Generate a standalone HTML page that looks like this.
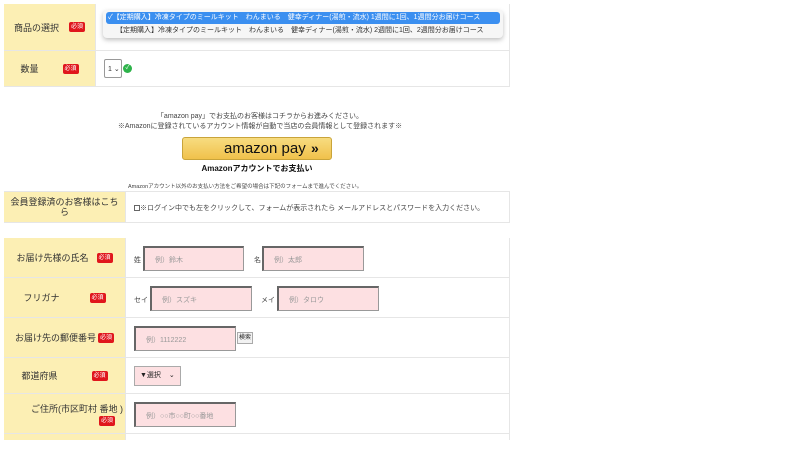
<!DOCTYPE html>
<html><head><meta charset="utf-8"><style>
*{box-sizing:border-box;margin:0;padding:0}
body{width:800px;height:450px;background:#fff;font-family:"Liberation Sans","Noto Sans CJK JP",sans-serif;color:#333;position:relative;overflow:hidden;font-size:8px}
.a{position:absolute}
.lab{background:#fcefb4;border-right:1px solid #e6e6e6;border-bottom:1px solid #e6e6e6;display:flex;align-items:center;justify-content:center;font-size:9px;color:#333}
.cell{border-bottom:1px solid #e6e6e6;border-right:1px solid #e6e6e6;background:#fff}
.req{background:#e0161c;color:#fff;font-size:6px;border-radius:2px;padding:1px 2px;line-height:8px}
.inp{background:#fde0e2;border:1px solid #999;border-top:2px solid #666;border-left:2px solid #666;height:25px;font-size:7px;color:#999;padding:7px 0 0 10px}
.t{font-size:7px;color:#444}
</style></head><body>
<div class="a" style="left:4px;top:4px;width:506px;height:83px;border-top:1px solid #e6e6e6;border-left:1px solid #e6e6e6"></div>
<div class="a lab" style="left:4px;top:4px;width:92px;height:47px"><span style="margin-right:10px">商品の選択</span><span class="req">必須</span></div>
<div class="a cell" style="left:96px;top:4px;width:414px;height:47px"></div>
<div class="a lab" style="left:4px;top:51px;width:92px;height:36px"><span style="margin-right:24px">数量</span><span class="req">必須</span></div>
<div class="a cell" style="left:96px;top:51px;width:414px;height:36px"></div>
<div class="a" style="left:103px;top:10px;width:400px;height:28px;background:#f6f6f6;border-radius:4px;box-shadow:0 2px 5px rgba(0,0,0,.25)"></div>
<div class="a" style="left:106px;top:12px;width:394px;height:12px;background:#3b8ff0;border-radius:3px;color:#fff;font-size:7px;line-height:12px;padding-left:2px;white-space:nowrap">✓【定期購入】冷凍タイプのミールキット　わんまいる　健幸ディナー(湯煎・流水) 1週間に1回、1週間分お届けコース</div>
<div class="a" style="left:116px;top:25px;font-size:7px;line-height:12px;color:#333;white-space:nowrap">【定期購入】冷凍タイプのミールキット　わんまいる　健幸ディナー(湯煎・流水) 2週間に1回、2週間分お届けコース</div>
<div class="a" style="left:104px;top:59px;width:18px;height:19px;border:1px solid #999;border-radius:2px;font-size:7px;padding:5px 0 0 3px">1 ⌄</div>
<div class="a" style="left:123px;top:64px;width:9px;height:9px;border-radius:50%;background:#2db34a;color:#fff;font-size:6px;line-height:9px;text-align:center">✓</div>
<div class="a t" style="left:0;width:520px;top:112px;text-align:center;line-height:10px">「amazon pay」でお支払のお客様はコチラからお進みください。<br>※Amazonに登録されているアカウント情報が自動で当店の会員情報として登録されます※</div>
<div class="a" style="left:182px;top:137px;width:150px;height:23px;background:linear-gradient(#f7dc80,#f0c14b);border:1px solid #c9a43a;border-radius:3px;color:#111">
<span style="position:absolute;left:41px;top:1px;font-size:15px;line-height:20px">amazon pay</span><span style="position:absolute;left:128px;top:0;font-weight:bold;font-size:14px;line-height:20px">»</span></div>
<div class="a" style="left:182px;width:150px;top:163px;text-align:center;font-size:8px;font-weight:bold;color:#111">Amazonアカウントでお支払い</div>
<div class="a" style="left:128px;top:182px;font-size:5.5px;color:#444;white-space:nowrap">Amazonアカウント以外のお支払い方法をご希望の場合は下記のフォームまで進んでください。</div>
<div class="a" style="left:4px;top:191px;width:506px;height:32px;border:1px solid #e6e6e6"></div>
<div class="a lab" style="left:4px;top:191px;width:122px;height:32px;text-align:center;line-height:10px;border-top:1px solid #e6e6e6">会員登録済のお客様はこち<br>ら</div>
<div class="a t" style="left:134px;top:203px;white-space:nowrap"><span style="display:inline-block;width:6px;height:6px;border:1px solid #666;vertical-align:middle"></span>※ログイン中でも左をクリックして、フォームが表示されたら メールアドレスとパスワードを入力ください。</div>
<div class="a" style="left:4px;top:238px;width:506px;height:202px;border-top:1px solid #e6e6e6;border-left:1px solid #e6e6e6"></div>
<div class="a lab" style="left:4px;top:238px;width:122px;height:40px"><span style="margin-right:8px">お届け先様の氏名</span><span class="req">必須</span></div>
<div class="a cell" style="left:126px;top:238px;width:384px;height:40px"></div>
<div class="a lab" style="left:4px;top:278px;width:122px;height:40px"><span style="margin-right:30px">フリガナ</span><span class="req">必須</span></div>
<div class="a cell" style="left:126px;top:278px;width:384px;height:40px"></div>
<div class="a lab" style="left:4px;top:318px;width:122px;height:40px"><span style="margin-right:2px">お届け先の郵便番号</span><span class="req">必須</span></div>
<div class="a cell" style="left:126px;top:318px;width:384px;height:40px"></div>
<div class="a lab" style="left:4px;top:358px;width:122px;height:36px"><span style="margin-right:34px">都道府県</span><span class="req">必須</span></div>
<div class="a cell" style="left:126px;top:358px;width:384px;height:36px"></div>
<div class="a lab" style="left:4px;top:394px;width:122px;height:40px;flex-direction:column;align-items:flex-end;padding-right:10px"><span style="margin-right:-8px">ご住所(市区町村 番地 )</span><span class="req" style="margin-top:1px">必須</span></div>
<div class="a cell" style="left:126px;top:394px;width:384px;height:40px"></div>
<div class="a lab" style="left:4px;top:434px;width:122px;height:6px;border-bottom:none"></div>
<div class="a" style="left:126px;top:434px;width:384px;height:6px;border-right:1px solid #e6e6e6"></div>
<div class="a t" style="left:134px;top:255px">姓</div>
<div class="a inp" style="left:143px;top:246px;width:101px">例）鈴木</div>
<div class="a t" style="left:254px;top:255px">名</div>
<div class="a inp" style="left:262px;top:246px;width:102px">例）太郎</div>
<div class="a t" style="left:134px;top:295px">セイ</div>
<div class="a inp" style="left:150px;top:286px;width:102px">例）スズキ</div>
<div class="a t" style="left:261px;top:295px">メイ</div>
<div class="a inp" style="left:277px;top:286px;width:102px">例）タロウ</div>
<div class="a inp" style="left:134px;top:326px;width:102px">例）1112222</div>
<div class="a" style="left:237px;top:332px;width:16px;height:12px;border:1px solid #aaa;background:#f2f2f2;font-size:6px;line-height:10px;text-align:center;color:#222">検索</div>
<div class="a" style="left:134px;top:366px;width:47px;height:20px;border:1px solid #aaa;background:#fde0e2;font-size:7px;line-height:18px;padding-left:5px;color:#222">▼選択 <span style="margin-left:6px">⌄</span></div>
<div class="a inp" style="left:134px;top:402px;width:102px">例）○○市○○町○○番地</div>
</body></html>
